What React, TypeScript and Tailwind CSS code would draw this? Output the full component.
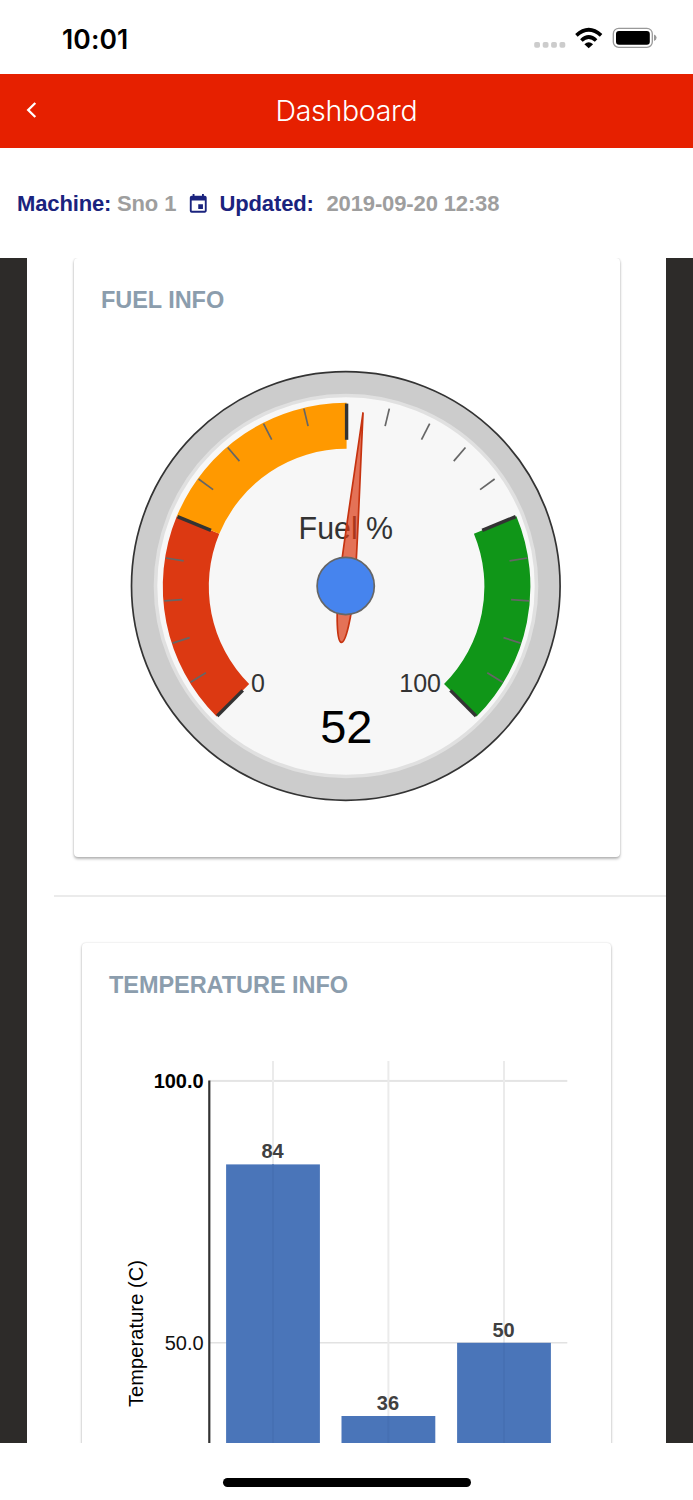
import { MdEvent } from 'react-icons/md';

const CENTER_X = 346.6;
const CENTER_Y = 586.6;

const polar = (value: number, radius: number) => {
  const angle = ((value - 50) * 2.7 * Math.PI) / 180;
  return {
    x: CENTER_X + radius * Math.sin(angle),
    y: CENTER_Y - radius * Math.cos(angle),
  };
};

const band = (from: number, to: number) => {
  const a = polar(from, 183.8);
  const b = polar(to, 183.8);
  const c = polar(to, 137.8);
  const d = polar(from, 137.8);
  return `M${a.x},${a.y} A183.8,183.8 0 0 1 ${b.x},${b.y} L${c.x},${c.y} A137.8,137.8 0 0 0 ${d.x},${d.y} Z`;
};

interface GaugeProps {
  label: string;
  value: number;
}

const Gauge = ({ label, value }: GaugeProps) => {
  const ticks = Array.from({ length: 21 }, (_, i) => i * 5);

  return (
    <svg
      className="block h-[440px] w-[440px] font-['Liberation_Sans',Arial,sans-serif]"
      viewBox="126 366 440 440"
    >
      <circle cx={345.8} cy={586} r={214.3} fill="#ccc" stroke="#333" strokeWidth={1.7} />
      <circle cx={346} cy={586} r={190.5} fill="#f7f7f7" stroke="#e0e0e0" strokeWidth={3.6} />
      <path d={band(75, 100)} fill="#109618" />
      <path d={band(0, 25)} fill="#dc3912" />
      <path d={band(25, 50)} fill="#ff9900" />
      <text x={298.6} y={539} fontSize={31} textLength={94.5} lengthAdjust="spacingAndGlyphs" fill="#333">
        {label}
      </text>
      {ticks.map((tick) => {
        const major = tick % 25 === 0;
        const start = polar(tick, 183);
        const end = polar(tick, major ? 146.8 : 165);
        return (
          <line
            key={tick}
            x1={start.x}
            y1={start.y}
            x2={end.x}
            y2={end.y}
            stroke={major ? '#333' : '#666'}
            strokeWidth={major ? 3.4 : 1.7}
          />
        );
      })}
      <text x={251} y={691.8} fontSize={25} fill="#333">
        0
      </text>
      <text x={441} y={691.8} fontSize={25} textAnchor="end" fill="#333">
        100
      </text>
      <text x={346.3} y={743} fontSize={47} textAnchor="middle">
        {value}
      </text>
      <path
        d="M0,-175 C-2.5,-120 -8,-25 -7.9,0 C-7.8,30 -4.5,56 0,56 C4.5,56 7.8,30 7.9,0 C8,-25 2.5,-120 0,-175 Z"
        transform={`translate(${CENTER_X} ${CENTER_Y}) rotate(${(value - 50) * 2.7})`}
        fill="#dc3912"
        fillOpacity={0.7}
        stroke="#c63310"
        strokeWidth={1.7}
      />
      <circle cx={345.7} cy={586} r={28.6} fill="#4684ee" stroke="#666" strokeWidth={1.7} />
    </svg>
  );
};

const bars = [
  { center: 273, top: 1164.4, value: 84 },
  { center: 388.4, top: 1416, value: 36 },
  { center: 504, top: 1342.8, value: 50 },
];

const TemperatureChart = () => (
  <svg
    className="block h-[400px] w-[529px] font-['Liberation_Sans',Arial,sans-serif]"
    viewBox="82 1043 529 400"
  >
    <rect x={209} y={1079.9} width={358.3} height={2} fill="#e4e4e4" />
    <rect x={209} y={1342} width={358.3} height={1.5} fill="#e2e2e2" />
    {bars.map((bar) => (
      <rect key={bar.center} x={bar.center - 1} y={1061} width={2} height={382} fill="#ebebeb" />
    ))}
    <rect x={208.2} y={1080.5} width={2.2} height={363} fill="#333" />
    {bars.map((bar) => (
      <g key={bar.center}>
        <rect x={bar.center - 46.9} y={bar.top} width={93.8} height={1500 - bar.top} fill="#4a75b9" />
        <rect x={bar.center - 1} y={bar.top} width={2} height={1500 - bar.top} fill="#4670b3" />
        <text
          x={bar.center - 0.5}
          y={bar.top - 6.2}
          fontSize={20}
          fontWeight={700}
          textAnchor="middle"
          fill="#404040"
        >
          {bar.value}
        </text>
      </g>
    ))}
    <text x={203.7} y={1087.5} fontSize={20} fontWeight={700} textAnchor="end">
      100.0
    </text>
    <text x={203.7} y={1350} fontSize={20} textAnchor="end" fill="#111">
      50.0
    </text>
    <text transform="translate(142.5 1407) rotate(-90)" fontSize={20} textLength={147}>
      Temperature (C)
    </text>
  </svg>
);

const StatusBar = () => (
  <div className="flex h-[74px] shrink-0 items-start justify-between pr-9 pl-[62px]">
    <span className="mt-[22.5px] font-[Inter,sans-serif] text-[26.5px] leading-8 font-semibold tracking-[0.1px]">
      10:01
    </span>
    <svg className="mt-[22px] h-8 w-[124px]" viewBox="533 22 124 32">
      {[534.2, 542.7, 551.1, 559.5].map((x) => (
        <rect key={x} x={x} y={42} width={5.8} height={5.8} rx={1.8} fill="#ccc" />
      ))}
      <path d="M584.4,44.2 Q588.7,40.4 593.1,44.2 L588.7,48.2 Z" />
      <path d="M581.4,40.5 Q588.7,33.6 596.1,40.5" fill="none" stroke="#000" strokeWidth={3.7} />
      <path d="M576.4,35.3 Q588.7,24.2 601.1,35.3" fill="none" stroke="#000" strokeWidth={3.7} />
      <rect x={613.3} y={28.3} width={39} height={19} rx={5.4} fill="none" stroke="#999" strokeWidth={1.3} />
      <rect x={616} y={31} width={33.8} height={13.8} rx={3} />
      <path d="M654,34.6 Q656.6,35.5 656.6,37.7 Q656.6,40 654,40.9 Z" fill="#999" />
    </svg>
  </div>
);

const cardTitle = "font-bold text-[#8b9dad] text-[23.5px] leading-7 whitespace-nowrap tracking-[-0.05px]";

export default function App() {
  return (
    <div className="flex h-[1500px] w-[693px] flex-col overflow-hidden bg-white font-['Liberation_Sans',Arial,sans-serif] text-black">
      <StatusBar />

      <header className="grid h-[73.5px] shrink-0 grid-cols-[60px_1fr_60px] items-center bg-[#e62000] text-white">
        <svg className="-mt-0.5 ml-[25px] h-5 w-3" viewBox="0 0 12 20" fill="none">
          <path d="M10.3 3 L3.2 10 L10.3 17" stroke="#fff" strokeWidth={2.3} />
        </svg>
        <h1 className="text-center font-[Inter,sans-serif] text-[28.5px] leading-9 font-light tracking-[-0.3px]">
          Dashboard
        </h1>
      </header>

      <div className="flex h-[110.5px] shrink-0 items-center pt-0.5 pl-[17px] text-[22px] leading-7 font-bold tracking-[-0.13px] whitespace-nowrap text-[#1a237e]">
        <span className="w-[100px]">Machine:</span>
        <span className="w-[70px] text-[#9e9e9e]">Sno 1</span>
        <MdEvent className="mr-[10px] size-[22.5px]" />
        <span className="w-[107px]">Updated:</span>
        <span className="text-[#9e9e9e]">2019-09-20 12:38</span>
      </div>

      <main className="h-[1185px] shrink-0 overflow-hidden bg-[#2d2b29] pr-[27px] pl-[27px]">
        <div className="flex h-full flex-col bg-white">
          <section className="mr-[46.5px] ml-[47px] flex h-[599px] shrink-0 flex-col rounded-[4px] bg-white shadow-[0_2px_3px_rgba(0,0,0,0.28),0_0_2px_rgba(0,0,0,0.16)]">
            <h2 className={`${cardTitle} mt-7 ml-[27px]`}>FUEL INFO</h2>
            <div className="mt-[52px] ml-[52px]">
              <Gauge label="Fuel %" value={52} />
            </div>
          </section>
          <hr className="mt-[38px] ml-[27px] h-0.5 shrink-0 border-0 bg-[#ebebeb]" />
          <section className="mt-[46px] mr-[55px] ml-[55px] flex h-[600px] shrink-0 flex-col rounded-[4px] bg-white shadow-[0_2px_3px_rgba(0,0,0,0.26),0_0_2px_rgba(0,0,0,0.16)]">
            <h2 className={`${cardTitle} mt-7 ml-[27px]`}>TEMPERATURE INFO</h2>
            <div className="mt-11">
              <TemperatureChart />
            </div>
          </section>
        </div>
      </main>

      <footer className="flex flex-1 justify-center pt-[35px]">
        <div className="h-[8.5px] w-[248px] rounded-full bg-black" />
      </footer>
    </div>
  );
}
